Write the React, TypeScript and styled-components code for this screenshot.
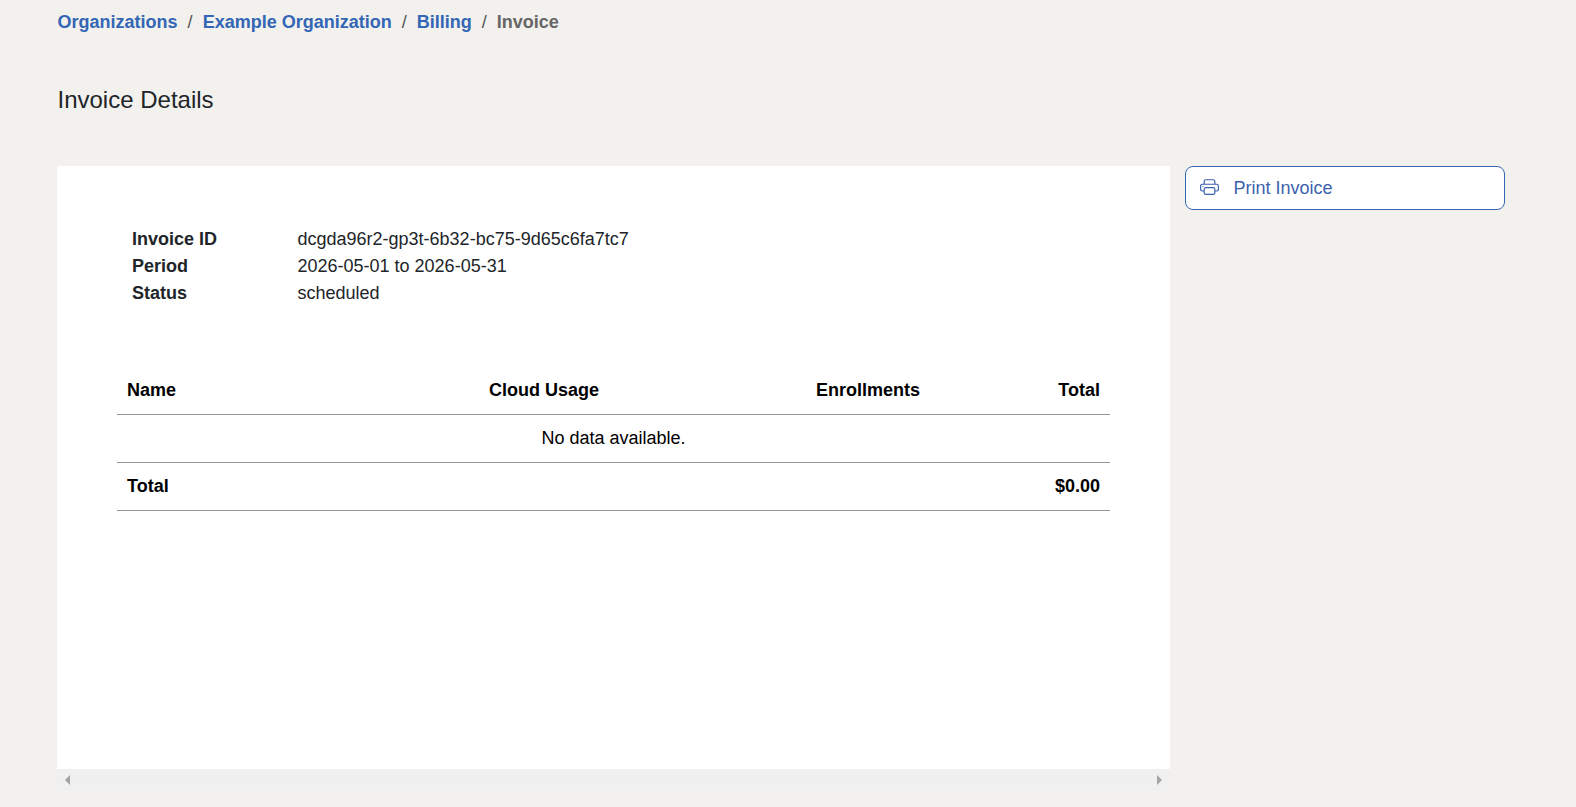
import React from 'react';
import styled, { createGlobalStyle } from 'styled-components';
import { BsPrinter } from 'react-icons/bs';

const GlobalStyle = createGlobalStyle`
  *, *::before, *::after { box-sizing: border-box; }
  body {
    margin: 0;
    background: #f2f1ed;
    color: #212529;
    font: 400 18px/27px "Liberation Sans", Arial, sans-serif;
    overflow: hidden;
  }
`;

const Page = styled.div`
  min-height: 807px;
  padding: 9px 71px 0 57px;
`;

const Breadcrumb = styled.nav`
  display: flex;
  gap: 10px;
  padding-left: 0.6px;
  font-weight: 700;
`;

const CrumbLink = styled.a`
  color: #3366b5;
  text-decoration: none;
`;

const Separator = styled.span`
  color: #555555;
  font-weight: 400;
`;

const CurrentCrumb = styled.span`
  color: #666666;
`;

const Title = styled.h1`
  margin: 48px 0 51px;
  padding-left: 0.5px;
  font-size: 24px;
  line-height: 31px;
  font-weight: 400;
`;

const Columns = styled.main`
  display: grid;
  grid-template-columns: 1113px 320px;
  gap: 15px;
  align-items: start;
`;

const Invoice = styled.section`
  display: flex;
  flex-direction: column;
`;

const Sheet = styled.div`
  height: 603px;
  padding: 60px;
  background: #ffffff;
`;

const Meta = styled.dl`
  display: grid;
  grid-template-columns: 165.5px 1fr;
  margin: 0 15px 60px;
`;

const MetaLabel = styled.dt`
  font-weight: 700;
`;

const MetaValue = styled.dd`
  margin: 0;
`;

const Table = styled.table`
  width: 993px;
  table-layout: fixed;
  border-spacing: 0;
  color: #000000;
`;

const Col = styled.col<{ $width: number }>`
  width: ${({ $width }) => $width}px;
`;

const Cell = styled.td<{ $align?: 'left' | 'center' | 'right'; $bold?: boolean }>`
  height: 48px;
  padding: 0 10px;
  border-bottom: 1px solid #949494;
  text-align: ${({ $align = 'left' }) => $align};
  font-weight: ${({ $bold }) => ($bold ? 700 : 400)};
`;

const ScrollTrack = styled.div`
  display: flex;
  justify-content: space-between;
  align-items: center;
  height: 21px;
  padding: 0 8px;
  background: #f0f0f0;
`;

const Arrow = styled.span<{ $side: 'left' | 'right' }>`
  border: solid transparent;
  border-width: 5px 0;
  ${({ $side }) => ($side === 'left' ? 'border-right' : 'border-left')}: 5px solid #a3a3a3;
`;

const PrintButton = styled.button`
  display: flex;
  align-items: center;
  gap: 14.5px;
  width: 100%;
  height: 44px;
  padding: 0 14px;
  border: 1px solid #3366b5;
  border-radius: 8px;
  background: #ffffff;
  color: #3b62ad;
  font: inherit;

  svg {
    width: 19px;
    height: 18px;
    margin-bottom: 2px;
  }
`;

export default function App() {
  return (
    <Page>
      <GlobalStyle />
      <Breadcrumb>
        <CrumbLink>Organizations</CrumbLink>
        <Separator>/</Separator>
        <CrumbLink>Example Organization</CrumbLink>
        <Separator>/</Separator>
        <CrumbLink>Billing</CrumbLink>
        <Separator>/</Separator>
        <CurrentCrumb>Invoice</CurrentCrumb>
      </Breadcrumb>
      <Title>Invoice Details</Title>
      <Columns>
        <Invoice>
          <Sheet>
            <Meta>
              <MetaLabel>Invoice ID</MetaLabel>
              <MetaValue>dcgda96r2-gp3t-6b32-bc75-9d65c6fa7tc7</MetaValue>
              <MetaLabel>Period</MetaLabel>
              <MetaValue>2026-05-01 to 2026-05-31</MetaValue>
              <MetaLabel>Status</MetaLabel>
              <MetaValue>scheduled</MetaValue>
            </Meta>
            <Table>
              <colgroup>
                <Col $width={240} />
                <Col $width={252} />
                <Col $width={321} />
                <Col $width={180} />
              </colgroup>
              <thead>
                <tr>
                  <Cell as="th" $bold>Name</Cell>
                  <Cell as="th" $bold $align="right">Cloud Usage</Cell>
                  <Cell as="th" $bold $align="right">Enrollments</Cell>
                  <Cell as="th" $bold $align="right">Total</Cell>
                </tr>
              </thead>
              <tbody>
                <tr>
                  <Cell colSpan={4} $align="center">No data available.</Cell>
                </tr>
              </tbody>
              <tfoot>
                <tr>
                  <Cell $bold colSpan={3}>Total</Cell>
                  <Cell $bold $align="right">$0.00</Cell>
                </tr>
              </tfoot>
            </Table>
          </Sheet>
          <ScrollTrack>
            <Arrow $side="left" />
            <Arrow $side="right" />
          </ScrollTrack>
        </Invoice>
        <PrintButton>
          <BsPrinter preserveAspectRatio="none" />
          Print Invoice
        </PrintButton>
      </Columns>
    </Page>
  );
}
